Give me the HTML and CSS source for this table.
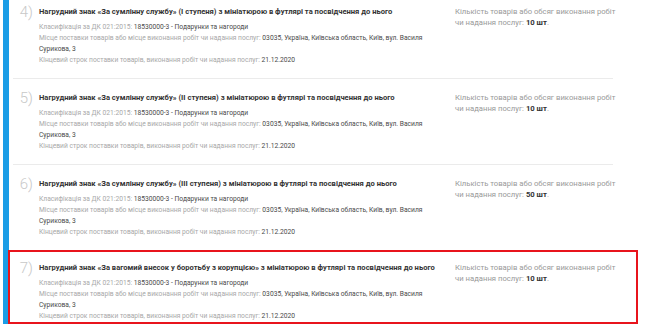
FILE: index.html
```html
<!DOCTYPE html>
<html lang="uk">
<head>
<meta charset="utf-8">
<title>Лоти</title>
<link rel="stylesheet" href="styles.css">
</head>
<body>
<div class="wrap">
  <div class="list">
    <div class="item">
      <div class="num">4)</div>
      <div class="main">
        <div class="title">Нагрудний знак «За сумлінну службу» (I ступеня) з мініатюрою в футлярі та посвідчення до нього</div>
        <div class="details">
          <div><span class="lbl">Класифікація за ДК 021:2015:</span> 18530000-3 - Подарунки та нагороди</div>
          <div><span class="lbl">Місце поставки товарів або місце виконання робіт чи надання послуг:</span> 03035, Україна, Київська область, Київ, вул. Василя Сурикова, 3</div>
          <div><span class="lbl">Кінцевий строк поставки товарів, виконання робіт чи надання послуг:</span> 21.12.2020</div>
        </div>
      </div>
      <div class="qty">Кількість товарів або обсяг виконання робіт<br>чи надання послуг: <b>10 шт</b>.</div>
    </div>
    <div class="item">
      <div class="num">5)</div>
      <div class="main">
        <div class="title">Нагрудний знак «За сумлінну службу» (II ступеня) з мініатюрою в футлярі та посвідчення до нього</div>
        <div class="details">
          <div><span class="lbl">Класифікація за ДК 021:2015:</span> 18530000-3 - Подарунки та нагороди</div>
          <div><span class="lbl">Місце поставки товарів або місце виконання робіт чи надання послуг:</span> 03035, Україна, Київська область, Київ, вул. Василя Сурикова, 3</div>
          <div><span class="lbl">Кінцевий строк поставки товарів, виконання робіт чи надання послуг:</span> 21.12.2020</div>
        </div>
      </div>
      <div class="qty">Кількість товарів або обсяг виконання робіт<br>чи надання послуг: <b>10 шт</b>.</div>
    </div>
    <div class="item">
      <div class="num">6)</div>
      <div class="main">
        <div class="title">Нагрудний знак «За сумлінну службу» (III ступеня) з мініатюрою в футлярі та посвідчення до нього</div>
        <div class="details">
          <div><span class="lbl">Класифікація за ДК 021:2015:</span> 18530000-3 - Подарунки та нагороди</div>
          <div><span class="lbl">Місце поставки товарів або місце виконання робіт чи надання послуг:</span> 03035, Україна, Київська область, Київ, вул. Василя Сурикова, 3</div>
          <div><span class="lbl">Кінцевий строк поставки товарів, виконання робіт чи надання послуг:</span> 21.12.2020</div>
        </div>
      </div>
      <div class="qty">Кількість товарів або обсяг виконання робіт<br>чи надання послуг: <b>50 шт</b>.</div>
    </div>
    <div class="item item-marked">
      <div class="num">7)</div>
      <div class="main">
        <div class="title">Нагрудний знак «За вагомий внесок у боротьбу з корупцією» з мініатюрою в футлярі та посвідчення до нього</div>
        <div class="details">
          <div><span class="lbl">Класифікація за ДК 021:2015:</span> 18530000-3 - Подарунки та нагороди</div>
          <div><span class="lbl">Місце поставки товарів або місце виконання робіт чи надання послуг:</span> 03035, Україна, Київська область, Київ, вул. Василя Сурикова, 3</div>
          <div><span class="lbl">Кінцевий строк поставки товарів, виконання робіт чи надання послуг:</span> 21.12.2020</div>
        </div>
      </div>
      <div class="qty">Кількість товарів або обсяг виконання робіт<br>чи надання послуг: <b>10 шт</b>.</div>
    </div>
  </div>
</div>
</body>
</html>
```
FILE: styles.css
```css
html, body {
  margin: 0;
  padding: 0;
  background: #fff;
  overflow: hidden;
}
body {
  font-family: Roboto, "Noto Sans", sans-serif;
  font-size: 7px;
  color: #555;
}
.wrap {
  margin-left: 3px;
  border-left: 6px solid #1a9de6;
  min-height: 327px;
  padding-left: 4px;
}
.list {
  width: 600px;
  margin-top: -8px;
}
.item {
  display: grid;
  grid-template-columns: 26px 416px 158px;
  align-items: start;
  border-top: 1px solid #ebebeb;
  padding: 13px 0 12px;
}
.num {
  font-size: 15px;
  font-weight: 300;
  color: #c8c8c8;
  line-height: 12px;
  text-align: right;
  padding-right: 6px;
}
.main {
  padding-right: 16px;
}
.title {
  font-size: 7.6px;
  font-weight: 700;
  color: #333;
  line-height: 12px;
}
.details {
  margin-top: 4px;
  font-size: 6.7px;
  line-height: 11px;
  color: #4a4a4a;
}
.lbl {
  color: #a8a8a8;
}
.qty {
  font-size: 7.7px;
  color: #999;
  line-height: 11px;
  white-space: nowrap;
}
.qty b {
  color: #333;
}
.item-marked {
  border: 2px solid #e8141c;
  margin: 0 -25px 0 -5px;
  padding: 10px 23px 0 3px;
}
```
